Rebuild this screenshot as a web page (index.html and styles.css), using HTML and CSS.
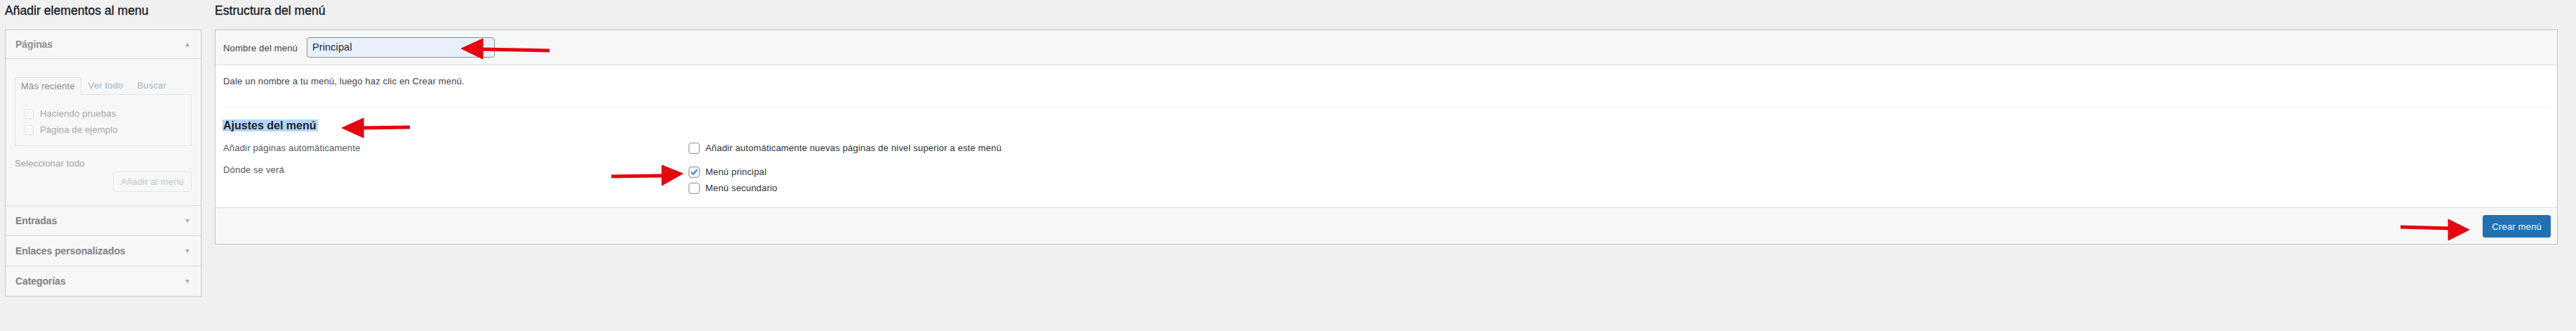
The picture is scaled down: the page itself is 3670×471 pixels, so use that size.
FILE: index.html
```html
<!DOCTYPE html>
<html lang="es">
<head>
<meta charset="utf-8">
<title>Menús</title>
<link rel="stylesheet" href="styles.css">
</head>
<body>
<div class="page">
  <div class="col-left">
    <h2 class="col-title">Añadir elementos al menu</h2>
    <div class="accordion">
      <div class="acc-section open">
        <div class="acc-title first"><span>Páginas</span><span class="tri up"></span></div>
        <div class="acc-content">
          <ul class="tabs">
            <li class="tab active">Más reciente</li>
            <li class="tab">Ver todo</li>
            <li class="tab">Buscar</li>
          </ul>
          <div class="tab-panel">
            <div class="item"><span class="cb-faint"></span>Haciendo pruebas</div>
            <div class="item"><span class="cb-faint"></span>Página de ejemplo</div>
          </div>
          <div class="select-all">Seleccionar todo</div>
          <div class="btn-row"><span class="btn-disabled">Añadir al menú</span></div>
        </div>
      </div>
      <div class="acc-section"><div class="acc-title"><span>Entradas</span><span class="tri down"></span></div></div>
      <div class="acc-section"><div class="acc-title"><span>Enlaces personalizados</span><span class="tri down"></span></div></div>
      <div class="acc-section"><div class="acc-title"><span>Categorías</span><span class="tri down"></span></div></div>
    </div>
  </div>
  <div class="col-right">
    <h2 class="col-title">Estructura del menú</h2>
    <div class="menu-edit">
      <div class="menu-header">
        <span class="name-label">Nombre del menú</span>
        <div class="name-input">Principal</div>
      </div>
      <div class="menu-body">
        <p class="hint">Dale un nombre a tu menú, luego haz clic en Crear menú.</p>
        <div class="settings">
          <h3 class="settings-title"><span class="sel">Ajustes del menú</span></h3>
          <div class="settings-grid">
            <div class="set-label row1">Añadir páginas automáticamente</div>
            <div class="set-opts">
              <div class="opt row1"><span class="cb"></span>Añadir automáticamente nuevas páginas de nivel superior a este menú</div>
            </div>
            <div class="set-label">Dónde se verá</div>
            <div class="set-opts">
              <div class="opt"><span class="cb checked"><svg viewBox="0 0 16 16" width="14" height="14"><path d="M3.6 8.2 L6.6 11.2 L12.4 4.4" fill="none" stroke="#2f6fb0" stroke-width="1.9" stroke-linecap="round" stroke-linejoin="round"/></svg></span>Menú principal</div>
              <div class="opt"><span class="cb"></span>Menú secundario</div>
            </div>
          </div>
        </div>
      </div>
      <div class="menu-footer"><button class="btn-primary">Crear menú</button></div>
    </div>
  </div>
</div>
<svg class="annotations" width="3670" height="471" viewBox="0 0 3670 471">
  <g fill="#e4070f" stroke="#e4070f">
    <line x1="783" y1="72" x2="684" y2="70" stroke-width="5"/>
    <polygon points="657,69 688,55 688,84" stroke-width="1"/>
    <line x1="584" y1="181" x2="514" y2="182" stroke-width="5"/>
    <polygon points="487,182 518,168 518,196" stroke-width="1"/>
    <line x1="871" y1="251" x2="946" y2="250" stroke-width="5"/>
    <polygon points="973,247 943,235 943,264" stroke-width="1"/>
    <line x1="3420" y1="323" x2="3492" y2="325" stroke-width="5"/>
    <polygon points="3518,327 3488,312 3488,342" stroke-width="1"/>
  </g>
</svg>
</body>
</html>
```
FILE: styles.css
```css
* { box-sizing: border-box; }
html, body { margin: 0; padding: 0; }
body {
  background: #f0f0f1;
  font-family: "Liberation Sans", Arial, sans-serif;
  font-size: 13px;
  letter-spacing: .18px;
  color: #3c434a;
  position: relative;
  overflow: hidden;
}
.page {
  display: flex;
  align-items: flex-start;
  gap: 19px;
  padding: 0 26px 0 7px;
}
.col-left { width: 280px; flex: none; }
.col-right { flex: 1; min-width: 0; }
.col-title {
  margin: 0 0 12px;
  font-size: 17.5px;
  line-height: 30px;
  font-weight: 400;
  color: #1d2327;
  letter-spacing: .05px;
  -webkit-text-stroke: .4px #1d2327;
}

/* left accordion */
.accordion { border: 1px solid #c8c9cc; background: #f7f7f7; }
.acc-section + .acc-section { border-top: 1px solid #dcdcde; }
.acc-title {
  display: flex;
  justify-content: space-between;
  align-items: center;
  height: 42px;
  padding: 0 16px 0 14px;
  font-size: 14px;
  font-weight: 700;
  letter-spacing: -.1px;
  color: #7f8083;
}
.acc-title.first { height: 41px; border-bottom: 1px solid #dcdcde; color: #8f9093; }
.tri { width: 0; height: 0; border-left: 3.5px solid transparent; border-right: 3.5px solid transparent; }
.tri.up { border-bottom: 5px solid #a7a8aa; }
.tri.down { border-top: 5px solid #a7a8aa; }
.acc-content { padding: 26px 13px 19px; }
.tabs { display: flex; margin: 0; padding: 0; list-style: none; position: relative; z-index: 1; }
.tab { height: 24px; line-height: 23px; padding: 0 10px; color: #9fb3c7; }
.tab.active {
  padding: 0 8px;
  color: #8a8b8d;
  border: 1px solid #e2e3e4;
  border-bottom: 0;
  background: #f7f7f7;
  margin-bottom: -1px;
  height: 25px;
}
.tab-panel {
  border: 1px solid #e2e3e4;
  padding: 15px 12px 11px;
  height: 74px;
}
.item { display: flex; align-items: center; gap: 9px; line-height: 23px; color: #a3a4a6; }
.cb-faint { width: 14px; height: 14px; border: 1px solid #e6e6e7; border-radius: 3px; background: #f8f8f8; flex: none; }
.select-all { margin-top: 16px; line-height: 18px; color: #9c9d9f; }
.btn-row { display: flex; justify-content: flex-end; margin-top: 2px; }
.btn-disabled {
  height: 29px;
  line-height: 27px;
  padding: 0 10px;
  border: 1px solid #e6e6e7;
  border-radius: 3px;
  background: #f6f7f7;
  color: #c4c5c7;
}

/* right menu editor */
.menu-edit { border: 1px solid #c3c4c7; background: #fff; }
.menu-header {
  display: flex;
  align-items: center;
  gap: 13px;
  padding: 10px 11px 10px;
  background: #f6f7f7;
  border-bottom: 1px solid #dcdcde;
}
.name-label { color: #3c434a; padding-top: 2px; }
.name-input {
  width: 268px;
  height: 29px;
  line-height: 27px;
  padding: 0 7px;
  border: 1px solid #8c8f94;
  border-radius: 4px;
  background: #e8f0fe;
  font-size: 14.5px;
  color: #1d2327;
  letter-spacing: .1px;
}
.menu-body { padding: 14px 11px 16px; }
.hint { margin: 0 0 27px; line-height: 18px; color: #3c434a; }
.settings { border-top: 1px solid #f0f0f1; padding-top: 16px; }
.settings-title {
  margin: 0 0 12px;
  font-size: 16px;
  line-height: 20px;
  font-weight: 700;
  color: #1d2327;
  letter-spacing: 0;
}
.sel { background: #b4d5fb; padding: 0 3px 0 1px; margin-left: -1px; }
.settings-grid { display: grid; grid-template-columns: 663px 1fr; row-gap: 12px; }
.set-label { line-height: 18px; color: #50575e; }
.set-label.row1 { line-height: 20px; }
.opt { display: flex; align-items: center; gap: 8px; line-height: 23px; color: #2c3338; }
.opt.row1 { line-height: 20px; }
.cb {
  width: 16px;
  height: 16px;
  flex: none;
  border: 1px solid #8c8f94;
  border-radius: 4px;
  background: #fff;
  display: flex;
  align-items: center;
  justify-content: center;
}
.cb.checked { background: #eef4fb; }
.cb svg { display: block; }
.menu-footer {
  display: flex;
  justify-content: flex-end;
  padding: 10px 9px 9px;
  background: #f6f7f7;
  border-top: 1px solid #dcdcde;
}
.btn-primary {
  height: 32px;
  padding: 0 12px;
  border: 1px solid #2271b1;
  border-radius: 3px;
  background: #2271b1;
  color: #fff;
  font-family: "Liberation Sans", Arial, sans-serif;
  font-size: 13px;
  letter-spacing: .2px;
}

.annotations { position: absolute; top: 0; left: 0; pointer-events: none; }
```
